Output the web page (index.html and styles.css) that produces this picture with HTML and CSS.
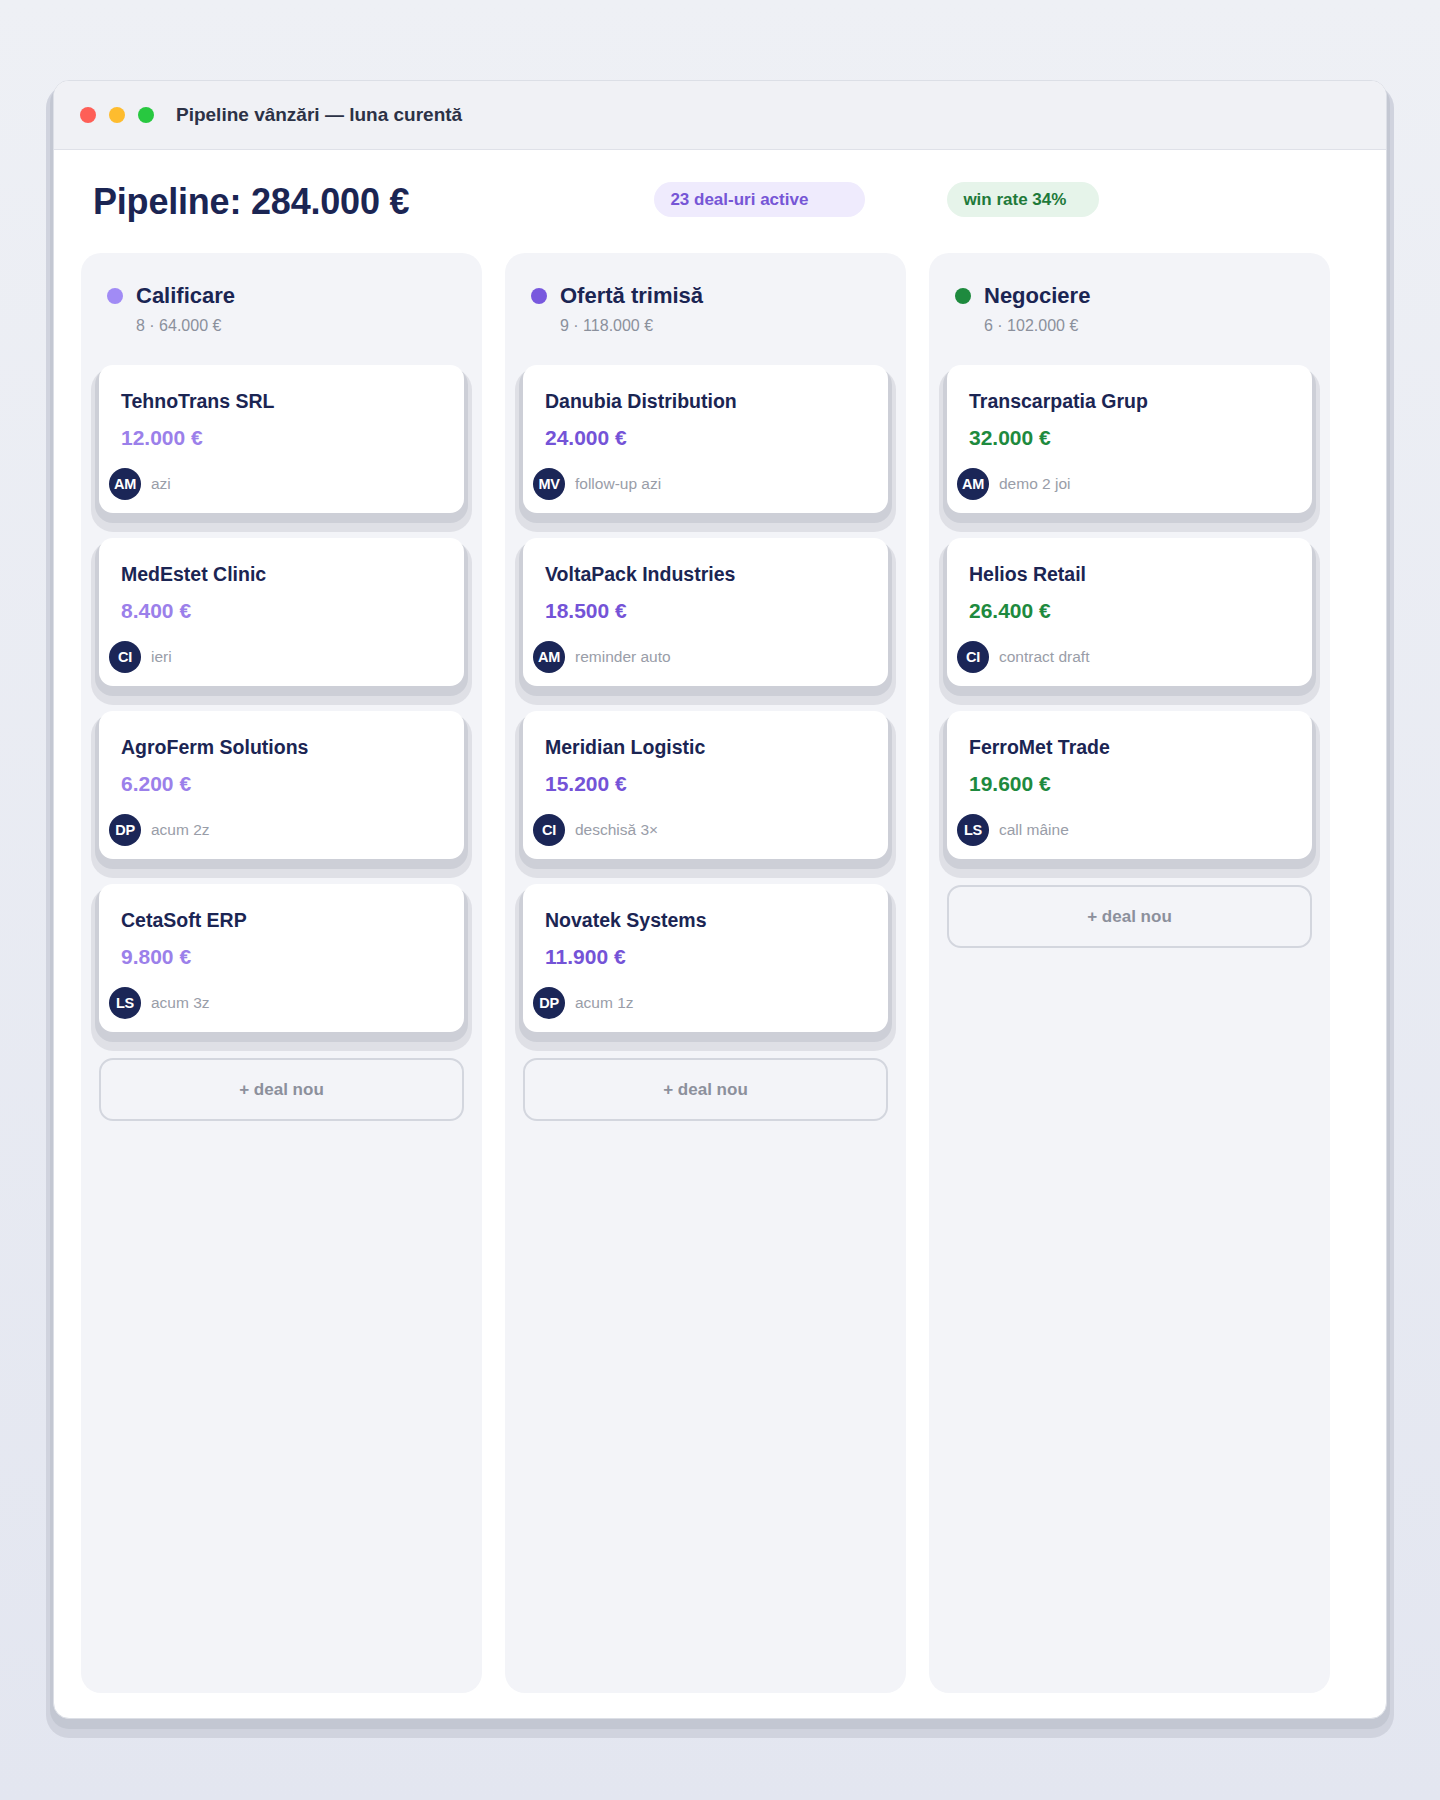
FILE: index.html
```html
<!DOCTYPE html>
<html lang="ro">
	<head>
		<meta http-equiv="content-type" content="text/html; charset=utf-8" />
		<title>Pipeline vânzări</title>
		<link rel="stylesheet" href="styles.css">
	</head>

	<body>
		<div class="window">
			<div class="titlebar">
				<div class="lights">
					<span class="light light-red"></span>
					<span class="light light-yellow"></span>
					<span class="light light-green"></span>
				</div>
				<div class="window-title">Pipeline vânzări — luna curentă</div>
			</div>

			<div class="content">
				<div class="header">
					<h1 class="total">Pipeline: 284.000 €</h1>
					<span class="pill pill-active">23 deal-uri active</span>
					<span class="pill pill-win">win rate 34%</span>
				</div>

				<div class="board">
					<!-- Calificare -->
					<div class="column col-qual">
						<div class="col-head">
							<span class="dot"></span>
							<span class="col-title">Calificare</span>
						</div>
						<div class="col-sub">8 · 64.000 €</div>
						<div class="cards">
							<div class="card">
								<div class="card-name">TehnoTrans SRL</div>
								<div class="card-amount">12.000 €</div>
								<div class="card-meta"><span class="avatar">AM</span><span class="meta-text">azi</span></div>
							</div>
							<div class="card">
								<div class="card-name">MedEstet Clinic</div>
								<div class="card-amount">8.400 €</div>
								<div class="card-meta"><span class="avatar">CI</span><span class="meta-text">ieri</span></div>
							</div>
							<div class="card">
								<div class="card-name">AgroFerm Solutions</div>
								<div class="card-amount">6.200 €</div>
								<div class="card-meta"><span class="avatar">DP</span><span class="meta-text">acum 2z</span></div>
							</div>
							<div class="card">
								<div class="card-name">CetaSoft ERP</div>
								<div class="card-amount">9.800 €</div>
								<div class="card-meta"><span class="avatar">LS</span><span class="meta-text">acum 3z</span></div>
							</div>
							<div class="add-btn">+ deal nou</div>
						</div>
					</div>

					<!-- Oferta trimisa -->
					<div class="column col-offer">
						<div class="col-head">
							<span class="dot"></span>
							<span class="col-title">Ofertă trimisă</span>
						</div>
						<div class="col-sub">9 · 118.000 €</div>
						<div class="cards">
							<div class="card">
								<div class="card-name">Danubia Distribution</div>
								<div class="card-amount">24.000 €</div>
								<div class="card-meta"><span class="avatar">MV</span><span class="meta-text">follow-up azi</span></div>
							</div>
							<div class="card">
								<div class="card-name">VoltaPack Industries</div>
								<div class="card-amount">18.500 €</div>
								<div class="card-meta"><span class="avatar">AM</span><span class="meta-text">reminder auto</span></div>
							</div>
							<div class="card">
								<div class="card-name">Meridian Logistic</div>
								<div class="card-amount">15.200 €</div>
								<div class="card-meta"><span class="avatar">CI</span><span class="meta-text">deschisă 3×</span></div>
							</div>
							<div class="card">
								<div class="card-name">Novatek Systems</div>
								<div class="card-amount">11.900 €</div>
								<div class="card-meta"><span class="avatar">DP</span><span class="meta-text">acum 1z</span></div>
							</div>
							<div class="add-btn">+ deal nou</div>
						</div>
					</div>

					<!-- Negociere -->
					<div class="column col-nego">
						<div class="col-head">
							<span class="dot"></span>
							<span class="col-title">Negociere</span>
						</div>
						<div class="col-sub">6 · 102.000 €</div>
						<div class="cards">
							<div class="card">
								<div class="card-name">Transcarpatia Grup</div>
								<div class="card-amount">32.000 €</div>
								<div class="card-meta"><span class="avatar">AM</span><span class="meta-text">demo 2 joi</span></div>
							</div>
							<div class="card">
								<div class="card-name">Helios Retail</div>
								<div class="card-amount">26.400 €</div>
								<div class="card-meta"><span class="avatar">CI</span><span class="meta-text">contract draft</span></div>
							</div>
							<div class="card">
								<div class="card-name">FerroMet Trade</div>
								<div class="card-amount">19.600 €</div>
								<div class="card-meta"><span class="avatar">LS</span><span class="meta-text">call mâine</span></div>
							</div>
							<div class="add-btn">+ deal nou</div>
						</div>
					</div>
				</div>
			</div>
		</div>
	</body>
</html>
```

FILE: styles.css
```css
body {
	margin: 0;
	min-height: 1800px;
	background: linear-gradient(180deg, #eef0f5 0%, #e3e6f0 100%);
	font-family: "Liberation Sans", Arial, sans-serif;
	color: #1b2553;
}

.window {
	box-sizing: border-box;
	width: 1334px;
	height: 1639px;
	margin: 80px 0 0 53px;
	background: #ffffff;
	border: 1px solid #dcdfe6;
	border-radius: 16px;
	overflow: hidden;
	display: flex;
	flex-direction: column;
	box-shadow: 0 7px 0 3px #c3c7d2, 0 12px 0 7px #d0d3de;
}

/* title bar */
.titlebar {
	height: 68px;
	flex-shrink: 0;
	display: flex;
	align-items: center;
	padding-left: 26px;
	background: #f0f1f5;
	border-bottom: 1px solid #dfe1e8;
}

.lights {
	display: flex;
	gap: 13px;
}

.light {
	width: 16px;
	height: 16px;
	border-radius: 50%;
}

.light-red { background: #fe5f57; }
.light-yellow { background: #febc2e; }
.light-green { background: #28c840; }

.window-title {
	margin-left: 22px;
	font-size: 19px;
	font-weight: bold;
	color: #2c3246;
}

/* content */
.content {
	flex: 1;
	display: flex;
	flex-direction: column;
	padding: 30px 0 25px 27px;
}

.header {
	display: flex;
	align-items: flex-start;
	height: 44px;
	padding-left: 12px;
}

.total {
	margin: 0;
	font-size: 36px;
	line-height: 44px;
	font-weight: bold;
	letter-spacing: -0.2px;
	color: #1b2553;
}

.pill {
	box-sizing: border-box;
	height: 35px;
	margin-top: 2px;
	line-height: 35px;
	border-radius: 18px;
	padding-left: 16px;
	font-size: 17px;
	font-weight: bold;
}

.pill-active {
	width: 211px;
	margin-left: 245px;
	background: #efebfd;
	color: #7656d6;
}

.pill-win {
	width: 152px;
	margin-left: 82px;
	background: #e6f4ea;
	color: #1f7a3a;
}

/* board */
.board {
	flex: 1;
	margin-top: 29px;
	display: grid;
	grid-template-columns: repeat(3, 401px);
	column-gap: 23px;
}

.column {
	background: #f3f4f8;
	border-radius: 20px;
	padding: 29px 18px 28px;
}

.col-head {
	display: flex;
	align-items: center;
	gap: 13px;
	padding-left: 8px;
}

.dot {
	width: 16px;
	height: 16px;
	border-radius: 50%;
}

.col-title {
	font-size: 22px;
	line-height: 28px;
	font-weight: bold;
	color: #1b2553;
}

.col-sub {
	margin: 6px 0 0 37px;
	font-size: 16px;
	line-height: 20px;
	color: #8b909c;
}

.cards {
	margin-top: 29px;
	display: flex;
	flex-direction: column;
	gap: 25px;
}

.card {
	background: #ffffff;
	border-radius: 14px;
	padding: 24px 22px 13px;
	box-shadow: 0 6px 0 4px #cdcfd7, 0 11px 0 8px #dfe0e6;
}

.card-name {
	font-size: 19.5px;
	line-height: 24px;
	font-weight: bold;
	color: #1b2553;
}

.card-amount {
	margin-top: 12px;
	font-size: 21px;
	line-height: 26px;
	font-weight: bold;
}

.card-meta {
	display: flex;
	align-items: center;
	gap: 10px;
	margin: 17px 0 0 -12px;
}

.avatar {
	width: 32px;
	height: 32px;
	border-radius: 50%;
	background: #1b2657;
	color: #ffffff;
	font-size: 14.5px;
	font-weight: bold;
	letter-spacing: -0.3px;
	display: flex;
	align-items: center;
	justify-content: center;
}

.meta-text {
	font-size: 15.5px;
	color: #999da8;
}

.add-btn {
	box-sizing: border-box;
	height: 63px;
	margin-top: 1px;
	border: 2px solid #d3d6de;
	border-radius: 14px;
	display: flex;
	align-items: center;
	justify-content: center;
	font-size: 17px;
	font-weight: bold;
	color: #8c909c;
}

/* stage colours */
.col-qual .dot { background: #a18bf5; }
.col-qual .card-amount { color: #9b80ea; }

.col-offer .dot { background: #7858de; }
.col-offer .card-amount { color: #7453d7; }

.col-nego .dot { background: #1e8a3e; }
.col-nego .card-amount { color: #1e8a3e; }
```
